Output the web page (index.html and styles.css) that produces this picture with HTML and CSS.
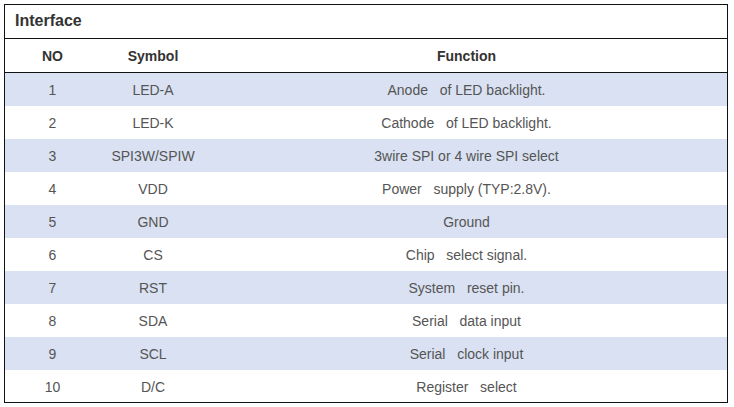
FILE: index.html
```html
<!DOCTYPE html>
<html>
<head>
<meta charset="utf-8">
<link rel="stylesheet" href="styles.css">
</head>
<body>
<div class="panel">
  <div class="title">Interface</div>
  <table class="pins">
    <colgroup>
      <col class="c-no">
      <col class="c-sym">
      <col class="c-fn">
    </colgroup>
    <thead>
      <tr><th>NO</th><th>Symbol</th><th>Function</th></tr>
    </thead>
    <tbody>
      <tr class="alt"><td>1</td><td>LED-A</td><td>Anode &nbsp;&nbsp;of LED backlight.</td></tr>
      <tr><td>2</td><td>LED-K</td><td>Cathode &nbsp;&nbsp;of LED backlight.</td></tr>
      <tr class="alt"><td>3</td><td>SPI3W/SPIW</td><td>3wire SPI or 4 wire SPI select</td></tr>
      <tr><td>4</td><td>VDD</td><td>Power &nbsp;&nbsp;supply (TYP:2.8V).</td></tr>
      <tr class="alt"><td>5</td><td>GND</td><td>Ground</td></tr>
      <tr><td>6</td><td>CS</td><td>Chip &nbsp;&nbsp;select signal.</td></tr>
      <tr class="alt"><td>7</td><td>RST</td><td>System &nbsp;&nbsp;reset pin.</td></tr>
      <tr><td>8</td><td>SDA</td><td>Serial &nbsp;&nbsp;data input</td></tr>
      <tr class="alt"><td>9</td><td>SCL</td><td>Serial &nbsp;&nbsp;clock input</td></tr>
      <tr><td>10</td><td>D/C</td><td>Register &nbsp;&nbsp;select</td></tr>
    </tbody>
  </table>
</div>
</body>
</html>
```
FILE: styles.css
```css
html, body {
  margin: 0;
  padding: 0;
  background: #fff;
}
body {
  padding: 4px 0 0 4px;
  font-family: "Liberation Sans", Arial, sans-serif;
}
.panel {
  border: 1px solid #111;
  box-sizing: border-box;
  width: 724px;
  height: 399px;
}
.title {
  height: 33px;
  line-height: 32px;
  padding-left: 10px;
  font-size: 16px;
  font-weight: bold;
  color: #333;
  border-bottom: 1px solid #111;
}
.pins {
  width: 100%;
  border-collapse: collapse;
  table-layout: fixed;
  font-size: 14px;
  color: #555;
}
.c-no { width: 95px; }
.c-sym { width: 106px; }
.pins th {
  height: 33px;
  padding: 0;
  font-weight: bold;
  color: #333;
  text-align: center;
  border-bottom: 1px solid #111;
}
.pins td {
  height: 33px;
  padding: 0;
  text-align: center;
  white-space: nowrap;
}
.pins tr.alt td {
  background: #d9e1f2;
}
```
